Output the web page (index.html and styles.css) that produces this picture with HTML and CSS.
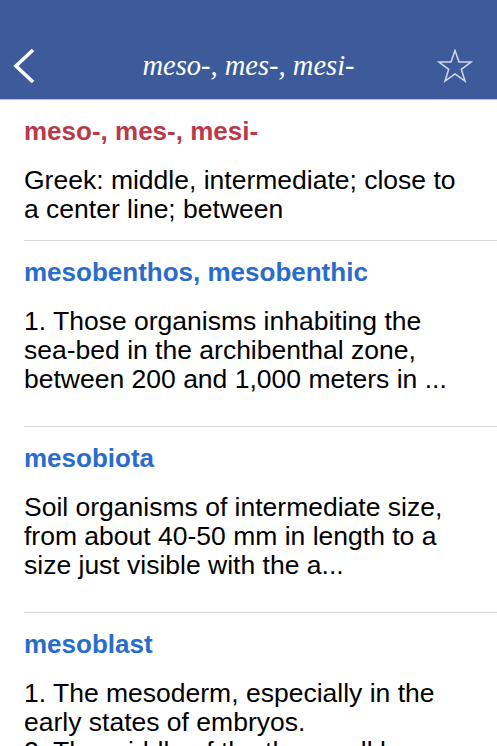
FILE: index.html
```html
<!DOCTYPE html>
<html lang="en">
<head>
<meta charset="utf-8">
<title>meso-, mes-, mesi-</title>
<link rel="stylesheet" href="styles.css">
</head>
<body>
<header class="navbar">
  <div class="navbar-row">
    <button class="nav-btn back" aria-label="Back">
      <svg width="28" height="36" viewBox="0 0 28 36"><polyline points="22,2 5,18 22,34" fill="none" stroke="#fff" stroke-width="3.6" stroke-linecap="butt" stroke-linejoin="miter"/></svg>
    </button>
    <h1 class="nav-title">meso-, mes-, mesi-</h1>
    <button class="nav-btn star" aria-label="Favorite">
      <svg width="36" height="34" viewBox="0 0 36 34"><polygon points="18,1.5 22,13 34,13 24.3,20.3 28,32 18,24.8 8,32 11.7,20.3 2,13 14,13" fill="none" stroke="#d3d9e8" stroke-width="1.5" stroke-linejoin="miter"/></svg>
    </button>
  </div>
</header>
<main class="list">
  <article class="entry">
    <h2 class="term term--current">meso-, mes-, mesi-</h2>
    <p class="desc">Greek: middle, intermediate; close to a center line; between</p>
  </article>
  <article class="entry entry--clamped">
    <h2 class="term">mesobenthos, mesobenthic</h2>
    <p class="desc">1. Those organisms inhabiting the sea-bed in the archibenthal zone, between 200 and 1,000 meters in ...</p>
  </article>
  <article class="entry entry--clamped">
    <h2 class="term">mesobiota</h2>
    <p class="desc">Soil organisms of intermediate size, from about 40-50 mm in length to a size just visible with the a...</p>
  </article>
  <article class="entry">
    <h2 class="term">mesoblast</h2>
    <p class="desc">1. The mesoderm, especially in the early states of embryos.<br>2. The middle of the three cell layers</p>
  </article>
</main>
</body>
</html>
```
FILE: styles.css
```css
html, body {
  margin: 0;
  padding: 0;
  background: #fff;
  overflow: hidden;
  height: 746px;
}
body {
  font-family: "Liberation Sans", Arial, sans-serif;
  color: #000;
}
.navbar {
  height: 99px;
  background: #3d5b9b;
  border-bottom: 1px solid #b4bed6;
  display: flex;
  flex-direction: column;
  justify-content: flex-end;
}
.navbar-row {
  height: 56px;
  margin-bottom: 5px;
  display: flex;
  align-items: center;
}
.nav-btn {
  background: none;
  border: 0;
  padding: 0;
  display: flex;
  align-items: center;
  width: 72px;
  flex: none;
}
.back {
  justify-content: flex-start;
  padding-left: 11px;
}
.star {
  justify-content: flex-end;
  padding-right: 24px;
}
.nav-title {
  margin: 0;
  font-family: "Liberation Serif", "Times New Roman", serif;
  font-style: italic;
  font-weight: normal;
  font-size: 28.5px;
  color: #fff;
  flex: 1;
  text-align: center;
}
.list {
  padding-left: 24px;
}
.entry {
  border-bottom: 1px solid #d8d8d8;
  padding: 17px 0 16px;
}
.entry--clamped {
  padding-bottom: 32px;
}
.term {
  margin: 0;
  font-size: 26px;
  line-height: 28px;
  font-weight: bold;
  color: #2a6ccb;
}
.term--current {
  color: #b73b4a;
}
.desc {
  margin: 21px 0 0;
  font-size: 26.5px;
  line-height: 29px;
  padding-right: 28px;
}
```
